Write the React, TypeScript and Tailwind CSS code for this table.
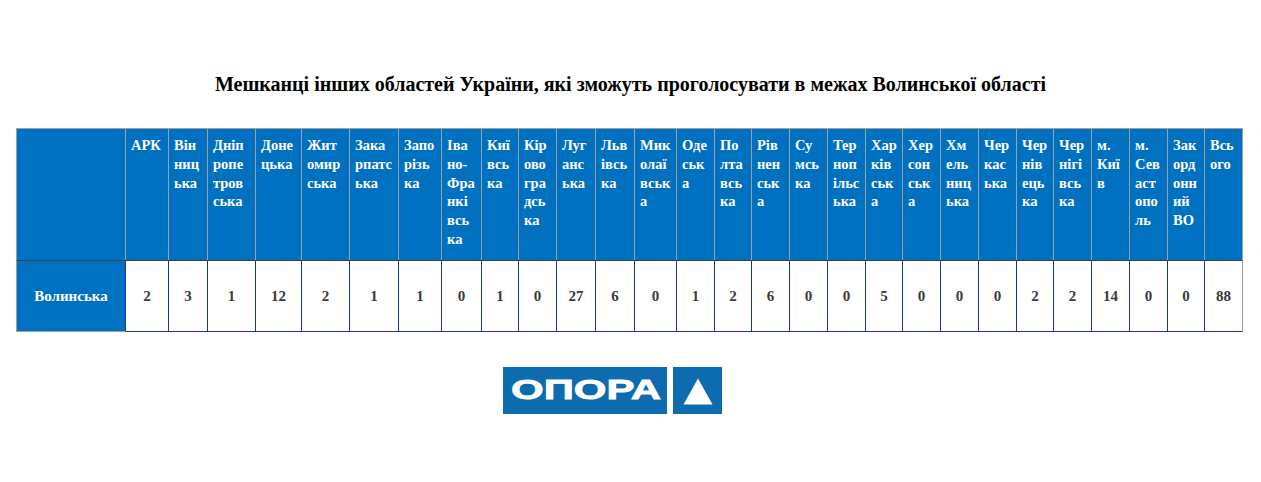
import React from "react"

type Column = {
  width: string
  lines: string[]
  value: number
}

// widths copied from the screenshot, border to border
const columns: Column[] = [
  { width: "43px", lines: ["АРК"], value: 2 },
  { width: "39px", lines: ["Він", "ниц", "ька"], value: 3 },
  { width: "48px", lines: ["Дніп", "ропе", "тров", "ська"], value: 1 },
  { width: "46px", lines: ["Доне", "цька"], value: 12 },
  { width: "48px", lines: ["Жит", "омир", "ська"], value: 2 },
  { width: "49px", lines: ["Зака", "рпатс", "ька"], value: 1 },
  { width: "43px", lines: ["Запо", "різь", "ка"], value: 1 },
  { width: "40px", lines: ["Іва", "но-", "Фра", "нкі", "всь", "ка"], value: 0 },
  { width: "37px", lines: ["Киї", "всь", "ка"], value: 1 },
  { width: "38px", lines: ["Кір", "ово", "гра", "дсь", "ка"], value: 0 },
  { width: "39px", lines: ["Луг", "анс", "ька"], value: 27 },
  { width: "39px", lines: ["Льв", "івсь", "ка"], value: 6 },
  { width: "42px", lines: ["Мик", "олаї", "вськ", "а"], value: 0 },
  { width: "38px", lines: ["Оде", "ськ", "а"], value: 1 },
  { width: "37px", lines: ["По", "лта", "всь", "ка"], value: 2 },
  { width: "38px", lines: ["Рів", "нен", "ськ", "а"], value: 6 },
  { width: "38px", lines: ["Су", "мсь", "ка"], value: 0 },
  { width: "38px", lines: ["Тер", "ноп", "ільс", "ька"], value: 0 },
  { width: "37px", lines: ["Хар", "ків", "ськ", "а"], value: 5 },
  { width: "38px", lines: ["Хер", "сон", "ськ", "а"], value: 0 },
  { width: "38px", lines: ["Хм", "ель", "ниц", "ька"], value: 0 },
  { width: "38px", lines: ["Чер", "кас", "ька"], value: 0 },
  { width: "37px", lines: ["Чер", "нів", "ець", "ка"], value: 2 },
  { width: "38px", lines: ["Чер", "нігі", "всь", "ка"], value: 2 },
  { width: "38px", lines: ["м.", "Киї", "в"], value: 14 },
  { width: "38px", lines: ["м.", "Сев", "аст", "опо", "ль"], value: 0 },
  { width: "37px", lines: ["Зак", "орд", "онн", "ий", "ВО"], value: 0 },
  { width: "38px", lines: ["Всь", "ого"], value: 88 },
]

const gridTemplate = "110px " + columns.map((c) => c.width).join(" ")

function OporaLogo() {
  return (
    <svg width="219" height="47" viewBox="0 0 219 47">
      <rect x="0" y="0" width="164" height="47" fill="#0d6cb0" />
      <rect x="170" y="0" width="49" height="47" fill="#0d6cb0" />
      <text
        x="8"
        y="32"
        textLength="150"
        lengthAdjust="spacingAndGlyphs"
        fill="#ffffff"
        stroke="#ffffff"
        strokeWidth="0.8"
        fontFamily="'Liberation Sans', Arial, sans-serif"
        fontWeight="700"
        fontSize="28"
      >
        ОПОРА
      </text>
      <polygon points="180.5,37.5 209.5,37.5 195,11.5" fill="#ffffff" />
    </svg>
  )
}

export default function App() {
  return (
    <div className="w-[1261px] h-[482px] bg-white font-['Liberation_Serif',serif]">
      <h1 className="pt-[70px] text-center text-[20px] leading-[28px] font-bold text-black">
        Мешканці інших областей України, які зможуть проголосувати в межах Волинської області
      </h1>

      <div className="mt-[30px] ml-[16px] w-[1227px] grid font-bold" style={{ gridTemplateColumns: gridTemplate }}>
        {/* header row */}
        <div className="h-[132px] bg-[#0070c0] border-t border-l border-r border-[#a0a0a0]" />
        {columns.map((col, i) => (
          <div
            key={"h" + i}
            className="h-[132px] bg-[#0070c0] border-t border-r border-[#a0a0a0] pt-[7px] pl-[5px] text-[14.5px] text-white leading-[18.8px] whitespace-nowrap overflow-hidden"
          >
            {col.lines.map((line, j) => (
              <div key={j}>{line}</div>
            ))}
          </div>
        ))}

        {/* body row */}
        <div className="h-[72px] bg-[#0070c0] border-t border-t-[#404040] border-l border-l-[#a0a0a0] border-b border-b-[#a0a0a0] border-r border-r-[#1f2fb5] flex items-center justify-center text-[15px] text-white">
          Волинська
        </div>
        {columns.map((col, i) => (
          <div
            key={"b" + i}
            className={
              "h-[72px] bg-white border-t border-t-[#404040] border-b border-b-[#1f2fb5] border-r flex items-center justify-center text-[15px] text-[#3a3a3a] " +
              (i === columns.length - 1 ? "border-r-[#a0a0a0]" : "border-r-[#1f2fb5]")
            }
          >
            {col.value}
          </div>
        ))}
      </div>

      <div className="mt-[35px] flex justify-center">
        <div className="w-[255px]">
          <OporaLogo />
        </div>
      </div>
    </div>
  )
}
